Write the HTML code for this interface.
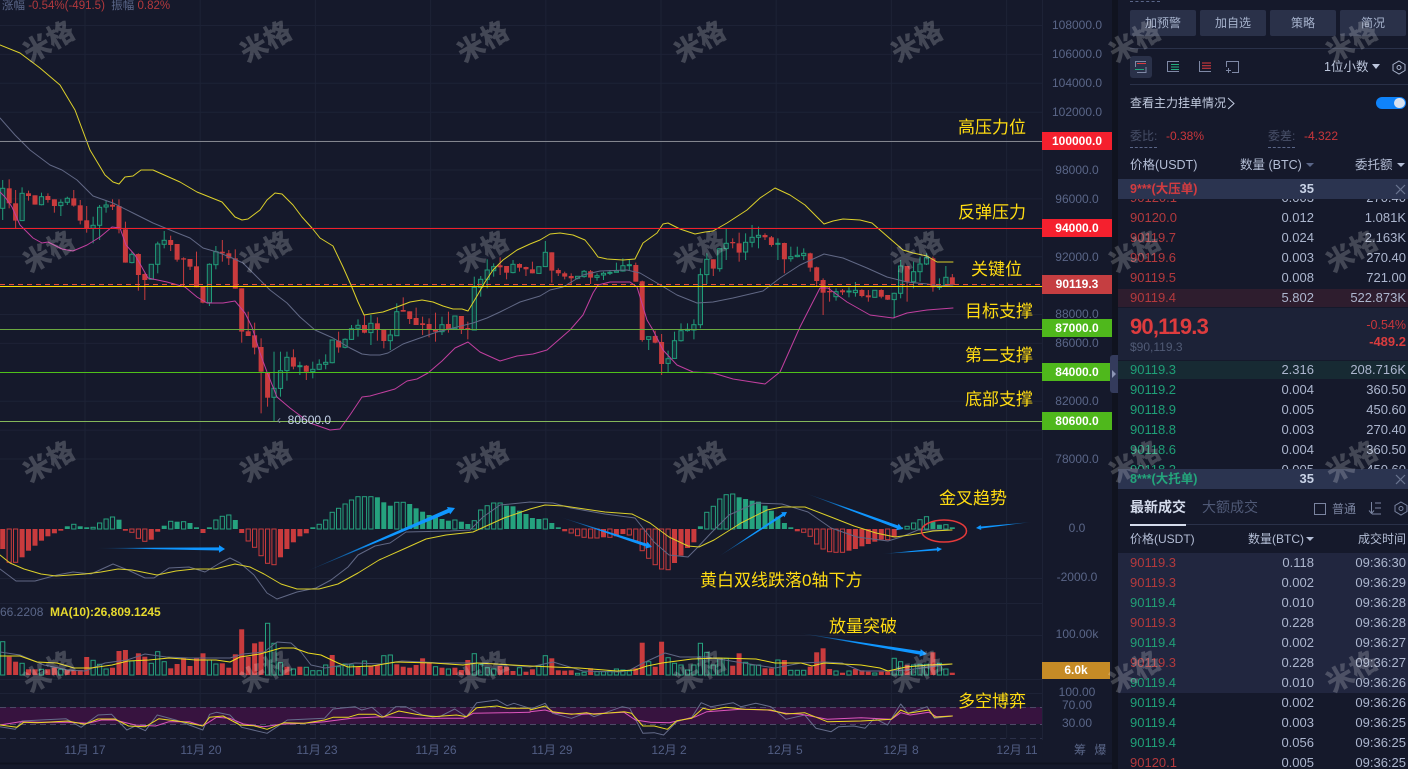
<!DOCTYPE html>
<html lang="zh"><head><meta charset="utf-8"><title>BTC/USDT</title>
<style>
*{box-sizing:border-box}
html,body{margin:0;padding:0;width:1408px;height:769px;overflow:hidden;background:#15192b;font-family:"Liberation Sans","Noto Sans CJK SC",sans-serif}
#root{position:relative;width:1408px;height:769px;overflow:hidden}
.a{position:absolute;white-space:nowrap}
.ax{position:absolute;width:70px;left:1042px;text-align:center;font-size:12px;line-height:16px;color:#5a6688;white-space:nowrap}
.tag{position:absolute;left:1042px;width:70px;height:18px;line-height:18px;text-align:center;font-size:12px;font-weight:bold;color:#fff}
.lb{position:absolute;color:#ffdc12;font-size:17px;line-height:22px;white-space:nowrap}
.dt{position:absolute;top:742px;width:60px;text-align:center;font-size:12px;line-height:16px;color:#525e84;white-space:nowrap}
.wm{position:absolute;z-index:30;font-size:27px;font-weight:900;line-height:30px;width:64px;text-align:center;color:rgba(255,255,255,.2);transform:translate(-31px,-16px) rotate(-30deg);white-space:nowrap;pointer-events:none}
#panel{position:absolute;left:1118px;top:0;width:290px;height:769px;background:#15192b;overflow:hidden;z-index:5}
.btn{position:absolute;top:10px;width:66px;height:26px;background:#2a3149;border-radius:2px;text-align:center;line-height:26px;font-size:12px;color:#a6b2cc}
.r{position:absolute;left:0;width:290px;height:20px;line-height:20px;font-size:13px;color:#adb7cf}
.r span{position:absolute;white-space:nowrap}
.p{left:12px}.q{right:94px}.m{right:2px}
.red{color:#b3393d}.grn{color:#1f9f77}
</style></head><body><div id="root">
<svg id="s" class="a" style="left:0;top:0" width="1118" height="769" viewBox="0 0 1118 769" xmlns="http://www.w3.org/2000/svg"></svg>

<div class="a" style="left:2px;top:-1px;font-size:11.5px;line-height:14px;color:#5a6688">涨幅 <span style="color:#b3393d">-0.54%(-491.5)</span>&nbsp; 振幅 <span style="color:#b3393d">0.82%</span></div>

<div class="ax" style="top:17px">108000.0</div><div class="ax" style="top:46px">106000.0</div><div class="ax" style="top:75px">104000.0</div><div class="ax" style="top:104px">102000.0</div>
<div class="ax" style="top:162px">98000.0</div><div class="ax" style="top:191px">96000.0</div><div class="ax" style="top:249px">92000.0</div><div class="ax" style="top:306px">88000.0</div><div class="ax" style="top:335px">86000.0</div><div class="ax" style="top:393px">82000.0</div><div class="ax" style="top:451px">78000.0</div>
<div class="ax" style="top:520px">0.0</div><div class="ax" style="top:569px">-2000.0</div><div class="ax" style="top:626px">100.00k</div><div class="ax" style="top:684px">100.00</div><div class="ax" style="top:697px">70.00</div><div class="ax" style="top:715px">30.00</div>

<div class="tag" style="top:132px;background:#f5202e">100000.0</div>
<div class="tag" style="top:219px;background:#f5202e">94000.0</div>
<div class="tag" style="top:275px;height:19px;background:#c53e41">90119.3</div>
<div class="tag" style="top:319px;background:#4fb81c">87000.0</div>
<div class="tag" style="top:363px;background:#4fb81c">84000.0</div>
<div class="tag" style="top:412px;background:#4fb81c">80600.0</div>
<div class="tag" style="top:662px;height:17px;line-height:17px;left:1042px;width:68px;background:#c68b26">6.0k</div>

<div class="a" style="left:277px;top:412px;font-size:12px;line-height:16px;color:#c5d2e8"><span style="color:#7d869e">‹</span>&nbsp; 80600.0</div>
<div class="a" style="left:0;top:604px;font-size:12px;line-height:16px;color:#5a6688">66.2208</div>
<div class="a" style="left:50px;top:604px;font-size:12px;line-height:16px;font-weight:bold;color:#e6d92e">MA(10):26,809.1245</div>

<div class="lb" style="left:958px;top:117px">高压力位</div>
<div class="lb" style="left:958px;top:202px">反弹压力</div>
<div class="lb" style="left:971px;top:259px">关键位</div>
<div class="lb" style="left:965px;top:301px">目标支撑</div>
<div class="lb" style="left:965px;top:345px">第二支撑</div>
<div class="lb" style="left:965px;top:389px">底部支撑</div>
<div class="lb" style="left:939px;top:488px">金叉趋势</div>
<div class="lb" style="left:700px;top:570px">黄白双线跌落0轴下方</div>
<div class="lb" style="left:829px;top:616px">放量突破</div>
<div class="lb" style="left:958px;top:691px">多空博弈</div>

<div class="dt" style="left:55px">11月 17</div><div class="dt" style="left:171px">11月 20</div><div class="dt" style="left:287px">11月 23</div><div class="dt" style="left:406px">11月 26</div><div class="dt" style="left:522px">11月 29</div><div class="dt" style="left:639px">12月 2</div><div class="dt" style="left:755px">12月 5</div><div class="dt" style="left:871px">12月 8</div><div class="dt" style="left:987px">12月 11</div>
<div class="a" style="left:1074px;top:742px;font-size:12px;line-height:16px;color:#5a6688;word-spacing:5px">筹 爆</div>

<div class="a" style="left:1112px;top:0;width:6px;height:769px;background:#10131f;z-index:6"></div>
<div class="a" style="left:1110px;top:355px;width:8px;height:38px;background:#343b5c;border-radius:3px 0 0 3px;z-index:7"><svg width="8" height="38" style="display:block"><path d="M2 15 L6 19 L2 23Z" fill="#8d96b5"/></svg></div>

<div id="panel">
<div class="a" style="left:12px;top:1px;width:30px;border-top:1px dashed #5a6688"></div>
<div class="btn" style="left:12px">加预警</div><div class="btn" style="left:82px">加自选</div><div class="btn" style="left:152px">策略</div><div class="btn" style="left:222px">简况</div>
<div class="a" style="left:12px;top:48px;width:278px;height:1px;background:#2a3149"></div>
<div class="a" style="left:12px;top:56px;width:22px;height:22px;background:#2a3149;border-radius:3px"></div>
<svg class="a" style="left:0;top:56px" width="140" height="24" fill="none" stroke-width="1">
<path d="M28 5.5H17.5V11" stroke="#7f89a6"/><path d="M19 7.5H28" stroke="#d9393e"/><path d="M17 13.5H26" stroke="#22a57b"/><path d="M28 11V16.5H19" stroke="#7f89a6"/>
<path d="M61 5.5H49.5V15.5H61" stroke="#7f89a6"/><path d="M53 8.5H61M53 11H61M53 13.5H61" stroke="#22b080"/>
<path d="M81.5 5V15.5H93" stroke="#7f89a6"/><path d="M84 7H93M84 9.7H93M84 12.3H93" stroke="#e23a3e"/>
<path d="M108.5 11V5.5H120.5V16.5H114" stroke="#7f89a6"/><path d="M108 14.5H113M110.5 12V17" stroke="#7f89a6"/>
</svg>
<div class="a" style="left:206px;top:59px;font-size:12.5px;line-height:16px;color:#bcc6dc">1位小数</div>
<svg class="a" style="left:254px;top:64px" width="10" height="6"><path d="M0 0H8L4 5Z" fill="#bcc6dc"/></svg>
<svg class="a" style="left:274px;top:60px" width="14" height="15" fill="none" stroke="#a9b4cc"><path d="M7 1L13 4.5V10.5L7 14L1 10.5V4.5Z"/><circle cx="7" cy="7.5" r="2"/></svg>
<div class="a" style="left:12px;top:84px;width:278px;height:1px;background:#2a3149"></div>
<div class="a" style="left:12px;top:95px;font-size:12px;line-height:16px;color:#c3cce0">查看主力挂单情况</div>
<svg class="a" style="left:108px;top:97px" width="10" height="13" fill="none" stroke="#c3cce0"><path d="M2 1L8 6.5L2 12"/></svg>
<div class="a" style="left:258px;top:97px;width:30px;height:12px;background:#0f83fa;border-radius:6px"></div>
<div class="a" style="left:276px;top:98px;width:11px;height:10px;background:#d8e2f0;border-radius:5px"></div>
<div class="a" style="left:12px;top:128px;font-size:12px;line-height:16px;color:#485069">委比:</div>
<div class="a" style="left:12px;top:147px;width:27px;border-top:1px dashed #5a6688"></div>
<div class="a" style="left:48px;top:128px;font-size:12px;line-height:16px;color:#c9363b">-0.38%</div>
<div class="a" style="left:150px;top:128px;font-size:12px;line-height:16px;color:#485069">委差:</div>
<div class="a" style="left:150px;top:147px;width:27px;border-top:1px dashed #5a6688"></div>
<div class="a" style="left:186px;top:128px;font-size:12px;line-height:16px;color:#c9363b">-4.322</div>
<div class="a" style="left:12px;top:157px;font-size:12.5px;line-height:16px;color:#b4bed6">价格(USDT)</div>
<div class="a" style="left:122px;top:157px;font-size:12.5px;line-height:16px;color:#b4bed6">数量 (BTC)</div>
<svg class="a" style="left:188px;top:163px" width="9" height="5"><path d="M0 0H8L4 4Z" fill="#5a6688"/></svg>
<div class="a" style="left:237px;top:157px;font-size:12.5px;line-height:16px;color:#b4bed6">委托额</div>
<svg class="a" style="left:279px;top:163px" width="9" height="5"><path d="M0 0H8L4 4Z" fill="#b4bed6"/></svg>

<div class="r" style="top:188px"><span class="p red">90120.1</span><span class="q">0.003</span><span class="m">270.40</span></div>
<div class="r" style="top:208px"><span class="p red">90120.0</span><span class="q">0.012</span><span class="m">1.081K</span></div>
<div class="r" style="top:228px"><span class="p red">90119.7</span><span class="q">0.024</span><span class="m">2.163K</span></div>
<div class="r" style="top:248px"><span class="p red">90119.6</span><span class="q">0.003</span><span class="m">270.40</span></div>
<div class="r" style="top:268px"><span class="p red">90119.5</span><span class="q">0.008</span><span class="m">721.00</span></div>
<div class="a" style="left:0;top:289px;width:290px;height:18px;background:#2e1d2e"></div>
<div class="r" style="top:288px"><span class="p red">90119.4</span><span class="q">5.802</span><span class="m">522.873K</span></div>
<div class="a" style="left:0;top:179px;width:290px;height:20px;background:#2b3450;z-index:2"></div>
<div class="a" style="left:12px;top:179px;z-index:3;font-size:12.5px;line-height:20px;font-weight:bold;color:#d43c40">9***(大压单)</div>
<div class="a" style="right:94px;top:179px;z-index:3;font-size:13px;line-height:20px;font-weight:bold;color:#c8d2e6">35</div>
<svg class="a" style="left:277px;top:184px;z-index:3" width="11" height="11" fill="none" stroke="#69748f" stroke-width="1.2"><path d="M1 1L10 10M10 1L1 10"/></svg>

<div class="a" style="left:0;top:308px;width:290px;height:52px;background:#1c2237"></div>
<div class="a" style="left:12px;top:313px;font-size:22px;line-height:28px;font-weight:bold;letter-spacing:-.8px;color:#de3c3e">90,119.3</div>
<div class="a" style="left:12px;top:339px;font-size:12px;line-height:16px;color:#505a75">$90,119.3</div>
<div class="a" style="right:2px;top:317px;font-size:12.5px;line-height:16px;color:#c9363b">-0.54%</div>
<div class="a" style="right:2px;top:334px;font-size:13px;line-height:16px;font-weight:bold;color:#d93c3e">-489.2</div>

<div class="a" style="left:0;top:361px;width:290px;height:18px;background:#172a33"></div>
<div class="r" style="top:360px"><span class="p grn">90119.3</span><span class="q">2.316</span><span class="m">208.716K</span></div>
<div class="r" style="top:380px"><span class="p grn">90119.2</span><span class="q">0.004</span><span class="m">360.50</span></div>
<div class="r" style="top:400px"><span class="p grn">90118.9</span><span class="q">0.005</span><span class="m">450.60</span></div>
<div class="r" style="top:420px"><span class="p grn">90118.8</span><span class="q">0.003</span><span class="m">270.40</span></div>
<div class="r" style="top:440px"><span class="p grn">90118.6</span><span class="q">0.004</span><span class="m">360.50</span></div>
<div class="r" style="top:460px"><span class="p grn">90118.2</span><span class="q">0.005</span><span class="m">450.60</span></div>
<div class="a" style="left:0;top:469px;width:290px;height:20px;background:#2b3450;z-index:2"></div>
<div class="a" style="left:12px;top:469px;z-index:3;font-size:12.5px;line-height:20px;font-weight:bold;color:#24a67c">8***(大托单)</div>
<div class="a" style="right:94px;top:469px;z-index:3;font-size:13px;line-height:20px;font-weight:bold;color:#c8d2e6">35</div>
<svg class="a" style="left:277px;top:474px;z-index:3" width="11" height="11" fill="none" stroke="#69748f" stroke-width="1.2"><path d="M1 1L10 10M10 1L1 10"/></svg>

<div class="a" style="left:12px;top:497px;font-size:14px;line-height:20px;font-weight:bold;color:#d5dcec">最新成交</div>
<div class="a" style="left:84px;top:497px;font-size:14px;line-height:20px;color:#4f5976">大额成交</div>
<div class="a" style="left:196px;top:503px;width:12px;height:12px;border:1px solid #7a84a0"></div>
<div class="a" style="left:214px;top:501px;font-size:12px;line-height:16px;color:#7a84a0">普通</div>
<svg class="a" style="left:250px;top:501px" width="14" height="15" fill="none" stroke="#7a84a0"><path d="M3.5 1V12M1 9.5L3.5 12.5L6 9.5M7 2H13M7 7H13M4 13H13"/></svg>
<svg class="a" style="left:276px;top:501px" width="14" height="15" fill="none" stroke="#7a84a0"><path d="M7 1L13 4.5V10.5L7 14L1 10.5V4.5Z"/><circle cx="7" cy="7.5" r="2"/></svg>
<div class="a" style="left:12px;top:524px;width:278px;height:1px;background:#2a3149"></div>
<div class="a" style="left:12px;top:524px;width:56px;height:2px;background:#d5dcec"></div>
<div class="a" style="left:12px;top:531px;font-size:12px;line-height:16px;color:#b4bed6">价格(USDT)</div>
<div class="a" style="left:130px;top:531px;font-size:12px;line-height:16px;color:#b4bed6">数量(BTC)</div>
<svg class="a" style="left:188px;top:537px" width="9" height="5"><path d="M0 0H8L4 4Z" fill="#b4bed6"/></svg>
<div class="a" style="right:2px;top:531px;font-size:12px;line-height:16px;color:#b4bed6">成交时间</div>
<div class="a" style="left:0;top:553px;width:290px;height:140px;background:#21263f"></div>
<div class="r" style="top:553px"><span class="p red">90119.3</span><span class="q">0.118</span><span class="m">09:36:30</span></div>
<div class="r" style="top:573px"><span class="p red">90119.3</span><span class="q">0.002</span><span class="m">09:36:29</span></div>
<div class="r" style="top:593px"><span class="p grn">90119.4</span><span class="q">0.010</span><span class="m">09:36:28</span></div>
<div class="r" style="top:613px"><span class="p red">90119.3</span><span class="q">0.228</span><span class="m">09:36:28</span></div>
<div class="r" style="top:633px"><span class="p grn">90119.4</span><span class="q">0.002</span><span class="m">09:36:27</span></div>
<div class="r" style="top:653px"><span class="p red">90119.3</span><span class="q">0.228</span><span class="m">09:36:27</span></div>
<div class="r" style="top:673px"><span class="p grn">90119.4</span><span class="q">0.010</span><span class="m">09:36:26</span></div>
<div class="r" style="top:693px"><span class="p grn">90119.4</span><span class="q">0.002</span><span class="m">09:36:26</span></div>
<div class="r" style="top:713px"><span class="p grn">90119.4</span><span class="q">0.003</span><span class="m">09:36:25</span></div>
<div class="r" style="top:733px"><span class="p grn">90119.4</span><span class="q">0.056</span><span class="m">09:36:25</span></div>
<div class="r" style="top:753px"><span class="p red">90120.1</span><span class="q">0.005</span><span class="m">09:36:25</span></div>
</div>

<div class="wm" style="left:48px;top:43px">米格</div><div class="wm" style="left:265px;top:43px">米格</div><div class="wm" style="left:482px;top:43px">米格</div><div class="wm" style="left:699px;top:43px">米格</div><div class="wm" style="left:916px;top:43px">米格</div><div class="wm" style="left:1134px;top:43px">米格</div><div class="wm" style="left:1351px;top:43px">米格</div>
<div class="wm" style="left:48px;top:253px">米格</div><div class="wm" style="left:265px;top:253px">米格</div><div class="wm" style="left:482px;top:253px">米格</div><div class="wm" style="left:699px;top:253px">米格</div><div class="wm" style="left:916px;top:253px">米格</div><div class="wm" style="left:1134px;top:253px">米格</div><div class="wm" style="left:1351px;top:253px">米格</div>
<div class="wm" style="left:48px;top:463px">米格</div><div class="wm" style="left:265px;top:463px">米格</div><div class="wm" style="left:482px;top:463px">米格</div><div class="wm" style="left:699px;top:463px">米格</div><div class="wm" style="left:916px;top:463px">米格</div><div class="wm" style="left:1134px;top:463px">米格</div><div class="wm" style="left:1351px;top:463px">米格</div>
<div class="wm" style="left:48px;top:673px">米格</div><div class="wm" style="left:265px;top:673px">米格</div><div class="wm" style="left:482px;top:673px">米格</div><div class="wm" style="left:699px;top:673px">米格</div><div class="wm" style="left:916px;top:673px">米格</div><div class="wm" style="left:1134px;top:673px">米格</div><div class="wm" style="left:1351px;top:673px">米格</div>
</div>
<script>
(function(){
var h=[];
function X(i){return 2.7+6.46*i}
function line(x1,y1,x2,y2,c,w,d){h.push('<line x1="'+x1+'" y1="'+y1+'" x2="'+x2+'" y2="'+y2+'" stroke="'+c+'" stroke-width="'+(w||1)+'"'+(d?' stroke-dasharray="'+d+'"':'')+'/>')}
function poly(a,c,w,ox,sx,oy,sy){ox=ox||0;sx=sx||1;oy=oy||0;sy=sy||1;var s=[];for(var i=0;i<a.length;i+=2)s.push((ox+a[i]/sx).toFixed(1)+','+(oy+a[i+1]/sy).toFixed(1));
h.push('<polyline points="'+s.join(' ')+'" fill="none" stroke="'+c+'" stroke-width="'+(w||1)+'" stroke-linejoin="round" stroke-linecap="round"/>')}
function rect(x,y,w,ht,f,st){h.push('<rect x="'+x.toFixed(1)+'" y="'+y.toFixed(1)+'" width="'+w+'" height="'+Math.max(ht,1).toFixed(1)+'" fill="'+f+'"'+(st?' stroke="'+st+'"':'')+'/>')}
h.push('<defs><linearGradient id="g" x1="0" y1="0" x2="1" y2="0"><stop offset="0" stop-color="#0f96ff" stop-opacity="0"/><stop offset=".45" stop-color="#0f96ff"/><stop offset="1" stop-color="#0f96ff"/></linearGradient></defs>');
// grid
var gc='#1d2236';
for(var k=0;k<16;k++){var y=25.5+28.9*k;line(0,y,1042,y,gc)}
[578,603,635,679,693].forEach(function(y){line(0,y+.5,1042,y+.5,gc)});
for(k=0;k<9;k++){var x=85+115.2*k;line(x,0,x,738,gc)}
line(1042.5,0,1042.5,740,'#1d2236');
line(0,763.5,1112,763.5,'#0f1220',2);
// candles
var R='#c93b3d',G='#209b78';
function cand(arr,start,oy){arr.forEach(function(c,j){var i=start+j,x=X(i),col=c[0]?G:R;
line(x,oy+c[3]/3,x,oy+c[4]/3,col,1);
var t=oy+c[1]/3,b=oy+c[2]/3;
if(c[0])rect(x-2.1,t,4.2,b-t,'#17323b',col);else rect(x-2.5,t,5,b-t,col)})}
cand([[1,55,115,30,150],[0,55,100,28,115],[0,100,152,60,175],[1,70,152,52,152],[0,70,78,62,92],[0,76,104,76,104],[1,80,104,68,106],[0,78,90,70,98],[0,88,108,88,128],[1,97,107,88,138],[1,85,97,80,105],[0,85,107,60,110],[0,106,152,90,163],[0,151,175,108,188],[1,166,175,140,220],[1,112,166,105,210],[1,105,111,92,128],[0,104,110,88,120],[0,108,178,88,190],[0,178,278,155,278],[1,253,278,245,280],[0,252,315,250,362],[0,312,330,310,390],[1,283,328,283,328],[1,222,283,215,310],[1,211,223,183,235],[0,210,225,197,243],[0,222,269,222,275],[0,265,269,262,350],[0,267,290,267,300],[0,289,352,245,352],[0,350,398,350,400],[1,283,398,280,408],[1,245,284,228,298],[0,245,250,210,275],[0,250,265,240,285],[0,265,356,238,356],[0,355,485,355,518],[0,484,498,425,498],[0,496,533,458,553],[0,531,605,505,730],[0,608,683,608,710],[1,655,682,545,755],[1,602,655,545,680],[1,562,602,545,632],[0,562,590,538,598],[1,587,590,575,615],[0,587,605,585,630],[1,598,605,575,625],[1,583,598,568,600],[1,577,583,553,598],[1,510,578,510,580],[0,512,532,485,548],[1,508,532,505,535],[1,476,508,465,510],[1,466,475,448,500],[0,465,488,435,490]],0,170);
cand([[1,340,368,315,405],[0,340,358,322,392],[0,360,393,360,415],[1,375,392,360,420],[1,305,377,280,377],[0,300,305,262,305],[0,304,327,304,342],[0,324,345,293,345],[0,340,345,320,375],[0,342,360,325,382],[0,360,365,308,395],[1,344,365,320,375],[0,342,358,305,368],[1,318,356,318,358],[0,318,358,318,372],[0,354,360,335,388],[1,232,360,200,360],[1,208,232,198,260],[1,180,208,148,235],[1,170,182,160,200],[0,166,172,142,195],[0,168,188,168,208],[1,163,188,150,190],[0,162,173,160,185],[0,171,178,170,198],[0,178,190,155,190],[1,170,190,170,190],[1,127,170,93,170],[0,127,182,127,218],[0,180,190,175,198],[0,190,200,185,208],[0,198,205,190,222],[1,199,205,198,208],[1,184,200,180,203],[0,184,203,180,222],[1,197,202,190,212],[1,190,195,185,210],[1,187,190,180,195],[1,183,187,158,187],[1,167,183,145,185],[1,164,166,148,182],[0,165,215,158,215],[0,214,390,212,395],[1,380,388,380,420],[0,378,398,362,400],[0,396,462,372,495],[1,446,460,422,488],[1,392,445,365,445],[1,362,392,340,395],[1,358,362,340,365],[1,344,360,328,388]],57,210);
cand([[1,194,344,175,355],[1,148,194,130,222],[0,148,176,148,198],[1,116,176,116,185],[1,100,116,55,150],[0,96,100,85,115],[0,100,128,68,155],[1,97,126,70,150],[1,82,97,45,112],[1,76,82,50,115],[0,75,82,70,90],[0,82,105,78,110],[1,100,103,85,150],[0,99,148,98,190],[1,140,146,110,155],[1,136,140,110,142],[1,130,137,115,150],[0,130,173,128,185],[0,172,213,170,228],[0,210,248,205,315],[0,243,247,230,275],[1,245,260,235,272],[0,241,247,237,255],[1,243,246,232,262],[1,241,248,216,260],[0,240,258,238,262],[0,256,262,240,275],[1,241,262,240,263],[0,240,260,238,265],[0,255,269,255,270],[1,250,269,248,325],[1,168,250,150,265],[0,168,215,168,275],[1,185,215,155,235],[1,162,185,140,215],[1,143,162,130,165],[0,145,232,140,245],[1,228,232,205,240],[1,202,225,168,228],[0,202,225,192,225]],108,210);
// bollinger
var yc='#dcd02a';
poly([0,45,20,53,40,68,60,85,75,110,90,150,105,175,113,182,119,184,125,177,133,176,141,170,153,170,180,182,197,192,222,202,235,217,242,220,248,219,260,210,267,200,275,193,282,194,293,205,302,217,312,228,320,238,333,246,343,267,351,285,358,302,364,315,370,314,383,312,397,307,410,302,422,300,433,302,443,306,453,309,462,309,468,311,477,296,485,282,493,270,503,260,517,250,530,244,540,240,550,234,560,233,573,235,585,240,593,250,598,257,607,259,623,260,635,259,643,243,657,233,663,224,668,223,680,229,695,234,705,232,713,231,727,223,747,210,760,198,775,188,790,195,805,205,810,210,824,224,833,221,843,219,860,220,872,223,880,230,895,243,903,250,913,253,927,256,937,262,953,262],yc);
poly([0,118,15,135,30,150,50,165,62,170,77,180,93,196,113,203,133,213,153,223,170,230,190,238,203,248,217,252,230,257,243,263,257,277,270,290,287,303,300,317,315,330,333,338,350,348,362,354,370,355,380,355,388,353,403,344,420,338,437,332,457,327,473,323,487,318,500,312,520,302,540,296,550,290,563,287,583,275,600,271,627,270,640,273,657,283,677,295,697,303,713,302,733,298,763,291,780,278,800,265,824,254,843,258,867,268,887,277,907,282,927,284,940,286,953,285],'#616885');
poly([0,192,5,197,12,207,20,225,33,238,42,243,48,242,62,249,73,251,87,245,100,237,112,227,120,228,126,245,135,255,148,278,167,282,185,287,197,297,207,303,223,303,235,301,245,313,252,327,260,353,267,372,277,397,290,408,310,423,330,430,340,429,350,415,362,397,370,396,395,389,407,381,417,379,428,373,442,361,455,348,468,342,480,352,500,361,517,356,533,354,547,350,570,330,583,315,593,293,598,285,610,282,630,282,637,287,647,320,653,330,663,350,677,365,693,372,713,373,733,379,765,384,780,372,800,327,820,288,828,288,847,302,870,315,893,318,907,313,927,310,953,308],'#c13f9f');
// h-lines
line(0,141.5,1042,141.5,'#83868f');
line(0,228.5,1042,228.5,'#f0202c');
line(0,284.5,1042,284.5,'#e8503a',1,'5 4');
line(0,286.5,1042,286.5,'#ffdc00');
line(0,329.5,1042,329.5,'#6aa840');
line(0,372.5,1042,372.5,'#4fc01a');
line(0,421.5,1042,421.5,'#85b85a');
line(1042,285,1052,285,'#fff');
// MACD histogram
var M=[-60,-100,-100,-85,-65,-50,-35,-22,-13,-5,8,14,8,5,5,18,30,36,28,-5,-10,-28,-37,-32,-8,10,23,22,22,18,5,-12,5,27,38,42,27,-12,-36,-55,-80,-103,-107,-85,-60,-40,-22,-13,5,14,27,50,62,75,87,97,97,97,95,80,70,80,80,75,62,52,42,35,30,25,27,22,15,25,57,70,78,78,70,68,55,45,33,30,30,18,5,-7,-12,-20,-25,-27,-27,-25,-25,-22,-15,-18,-35,-65,-88,-107,-120,-122,-102,-80,-57,-40,8,50,68,90,103,105,95,90,85,82,70,55,37,18,5,-7,-10,-22,-45,-60,-68,-70,-70,-65,-60,-52,-45,-38,-32,-32,-25,5,8,18,28,37,22,13,13,5];
M.forEach(function(v,i){var x=X(i),p=i?M[i-1]:0,hollow=Math.abs(v)>=Math.abs(p)&&(v*p>0);var c=v>0?'#25a27e':'#c93b3d',hh=Math.abs(v)/3,y=v>0?529-hh:529;
if(hollow)rect(x-2.1,y,4.2,hh,'none',c);else rect(x-2.5,y,5,hh,c)});
// MACD lines
poly([0,569,16,581,35,581,57,575,73,572,91,574,113,564,128,570,145,578,154,578,169,568,189,567,205,572,220,563,230,558,240,563,254,575,267,593,277,599,297,592,316,588,331,580,348,567,358,555,375,546,390,543,406,532,450,531,470,530,483,517,500,505,530,502,553,503,571,508,605,514,635,518,654,542,669,555,688,557,697,548,711,533,729,515,756,503,782,504,808,512,831,528,857,537,888,541,901,537,918,530,933,530,952,530],'#616885');
poly([0,555,10,563,24,569,41,574,56,576,85,574,101,572,118,569,132,570,157,575,176,571,194,569,215,569,235,564,250,567,264,574,281,584,297,589,319,589,338,584,358,573,379,560,406,548,426,539,446,535,473,532,504,518,530,509,545,505,564,506,605,512,632,514,650,523,669,537,688,546,699,547,714,540,741,523,767,510,782,507,805,507,831,517,854,526,876,533,895,537,910,535,933,531,952,530],yc);
// volume
var V=[100,55,40,35,17,17,17,17,22,17,15,15,15,54,44,32,18,22,72,75,42,65,55,35,70,40,20,33,52,27,52,65,45,33,35,22,62,137,55,95,100,155,95,37,25,18,25,23,13,13,30,60,25,33,30,25,42,28,30,58,60,32,25,22,30,50,38,25,22,18,22,15,45,64,32,22,18,27,25,12,22,10,17,28,58,50,14,13,14,5,8,20,10,10,12,18,15,12,20,97,40,25,100,52,35,30,15,30,95,68,30,50,50,28,65,38,30,30,20,20,45,45,14,14,14,25,68,80,18,12,7,12,18,14,10,6,10,10,50,40,30,30,32,32,68,35,18,7];
var VG={};[0,3,6,9,14,15,16,20,23,24,25,32,33,41,42,43,45,47,48,49,50,52,53,54,56,59,60,67,69,73,74,75,76,80,83,84,89,90,92,93,94,95,96,97,100,103,104,105,106,107,108,109,110,111,112,115,116,117,120,122,123,124,129,131,135,138,139,141,142,143,145,146].forEach(function(i){VG[i]=1});
V.forEach(function(v,i){var x=X(i),hh=v/3,y=675-hh;if(VG[i])rect(x-2.1,y,4.2,hh,'none','#25a27e');else rect(x-2.5,y,5,hh,'#c93b3d')});
poly([0,652,20,655,44,665,68,670,85,671,105,663,127,660,145,654,166,657,189,658,210,658,230,658,243,654,264,652,277,642,291,643,301,652,311,665,325,668,355,663,382,664,402,661,423,662,440,663,470,663,487,663,530,667,553,662,583,671,620,672,630,670,643,663,665,653,680,657,707,657,737,662,775,668,801,663,824,662,842,663,861,671,891,671,906,670,929,667,952,664],'#616885');
poly([0,656,20,656,37,662,57,663,74,668,91,668,112,665,128,661,149,660,169,658,183,659,196,660,216,660,230,662,240,657,260,654,281,648,294,648,308,653,321,655,338,663,348,667,372,666,396,662,433,663,463,665,477,663,530,666,553,667,579,668,617,671,635,670,647,666,662,663,692,659,718,658,756,659,775,663,801,663,812,666,824,663,861,665,880,668,888,671,906,667,929,665,952,664],'#ecdc1e');
// RSI
rect(0,707,1042,17,'#37133f');
line(0,707.5,1042,707.5,'#4c4a66',1,'6 4');line(0,724.5,1042,724.5,'#4c4a66',1,'6 4');line(0,738.5,1042,738.5,'#2b3049',1,'6 4');
function rsi(a1,a2,c,w){poly(a1,c,w,0,2.958,480,3);poly(a2,c,w,530,2.657,480,3)}
rsi([0,740,45,748,65,723,120,720,195,716,240,742,290,705,330,703,375,750,400,738,430,752,465,705,520,720,600,750,620,703,640,697,680,705,715,742,790,760,850,720,960,715,985,687,1050,680,1070,690,1100,682,1135,712,1170,680,1200,680,1250,705,1300,710,1345,687,1380,710,1410,668,1470,660,1500,677,1520,670,1568,685],[0,688,40,670,60,700,110,715,150,698,170,710,245,680,265,685,300,760,330,758,355,765,390,725,430,712,455,668,480,680,540,668,560,680,600,670,640,680,680,718,730,705,760,745,800,755,820,740,860,738,890,745,915,715,950,735,985,672,1005,700,1055,680,1075,715,1122,708],'#666d8b',1);
rsi([0,735,60,725,120,727,200,727,260,730,300,720,340,720,400,735,460,738,500,725,560,725,600,738,640,712,680,715,720,732,780,740,830,733,900,730,960,725,1040,715,1130,710,1230,715,1300,715,1370,715,1400,700,1568,697],[0,695,40,690,70,700,140,703,250,697,280,720,320,727,370,728,440,710,470,695,560,688,630,690,680,700,720,703,790,718,880,713,960,718,985,698,1010,705,1060,697,1080,710,1122,708],'#dc55bd',1);
rsi([0,735,50,742,70,727,110,728,200,723,250,733,290,717,340,717,380,738,430,740,470,716,540,725,600,738,620,712,660,708,710,735,750,737,790,748,840,728,900,730,960,720,985,712,1030,712,1060,703,1110,703,1130,712,1180,693,1230,703,1280,710,1350,705,1380,710,1410,683,1470,678,1500,685,1568,685],[0,690,40,678,60,695,110,703,150,698,170,703,250,695,270,700,300,738,330,738,365,748,390,722,430,715,460,685,480,690,520,682,570,688,640,690,680,702,730,698,790,725,880,723,960,718,985,690,1005,700,1060,690,1075,712,1122,708],'#e8d820',1);
// arrows
function arrow(x1,y1,x2,y2,w,hl,hw){var dx=x2-x1,dy=y2-y1,L=Math.sqrt(dx*dx+dy*dy),a=Math.atan2(dy,dx)*180/Math.PI;
h.push('<g transform="translate('+x1+','+y1+') rotate('+a.toFixed(2)+')"><polygon points="0,0 '+(L-hl)+','+(-w)+' '+(L-hl)+','+(-hw)+' '+L+',0 '+(L-hl)+','+hw+' '+(L-hl)+','+w+'" fill="url(#g)"/></g>')}
arrow(95,548,225,549,1.6,6,3.8);
arrow(305,572,455,508,2,7,4);
arrow(560,517,652,547,1.6,6,3.5);
arrow(718,557,787,512,1.3,5,3);
arrow(805,493,903,529,1.6,6,3.5);
arrow(882,554,942,549,1,5,2.5);
arrow(1032,522,976,528,1,5,2.5);
arrow(799,633,927,654,1.8,7,3.8);
h.push('<ellipse cx="944" cy="531" rx="22.5" ry="11" fill="none" stroke="#e63a3a" stroke-width="1.5"/>');
document.getElementById('s').innerHTML=h.join('');
})();
</script>
</body></html>
